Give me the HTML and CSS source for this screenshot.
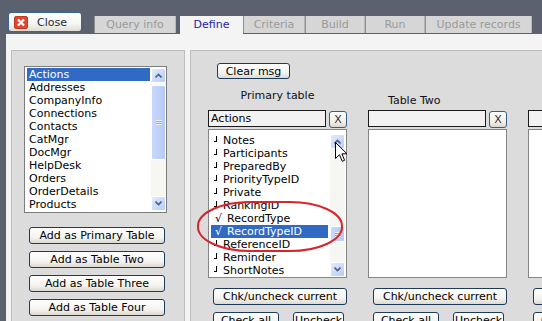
FILE: index.html
```html
<!DOCTYPE html>
<html lang="en">
<head>
  <meta charset="UTF-8" />
  <title>Query builder | Define</title>
  <link rel="stylesheet" href="styles.css">
</head>
<body>
  <div class="topbar">
    <button class="close-btn">
      <svg class="close-ico" width="14" height="13" viewBox="0 0 14 13">
        <rect x="0.5" y="0.5" width="13" height="12" rx="1.5" fill="#e2472f" stroke="#c23a22"/>
        <path d="M4 3.5 L10 9.5 M10 3.5 L4 9.5" stroke="#fff" stroke-width="2.2"/>
      </svg>
      Close
    </button>
    <div class="tabs">
      <div class="tab tab-query">Query info</div>
      <div class="tab active tab-define">Define</div>
      <div class="tab tab-criteria">Criteria</div>
      <div class="tab tab-build">Build</div>
      <div class="tab tab-run">Run</div>
      <div class="tab tab-update">Update records</div>
    </div>
  </div>

  <div class="content">
    <div class="left-panel">
      <div class="listbox tables">
        <div class="items">
          <div class="item sel">Actions</div>
          <div class="item">Addresses</div>
          <div class="item">CompanyInfo</div>
          <div class="item">Connections</div>
          <div class="item">Contacts</div>
          <div class="item">CatMgr</div>
          <div class="item">DocMgr</div>
          <div class="item">HelpDesk</div>
          <div class="item">Orders</div>
          <div class="item">OrderDetails</div>
          <div class="item">Products</div>
        </div>
        <div class="scrollbar">
          <div class="sb-btn"><svg width="7" height="5" viewBox="0 0 7 5"><path d="M0.5 4.5 L3.5 1.5 L6.5 4.5" fill="none" stroke="#4d6185" stroke-width="1.6"/></svg></div>
          <div class="sb-thumb tall"><span class="grip"></span></div>
          <div class="sb-btn down"><svg width="7" height="5" viewBox="0 0 7 5"><path d="M0.5 0.5 L3.5 3.5 L6.5 0.5" fill="none" stroke="#4d6185" stroke-width="1.6"/></svg></div>
        </div>
      </div>

      <div class="add-btns">
        <button class="btn">Add as Primary Table</button>
        <button class="btn">Add as Table Two</button>
        <button class="btn">Add as Table Three</button>
        <button class="btn">Add as Table Four</button>
      </div>
    </div>

    <div class="right-panel">
      <button class="btn clear-btn">Clear msg</button>

      <div class="columns">
        <!-- Primary table -->
        <div class="column">
          <div class="col-label">Primary table</div>
          <div class="pick-row">
            <div class="pick-input">Actions</div>
            <button class="x-btn">X</button>
          </div>
          <div class="listbox fields">
            <div class="items">
              <div class="item"><span class="mark"></span>Notes</div>
              <div class="item"><span class="mark"></span>Participants</div>
              <div class="item"><span class="mark"></span>PreparedBy</div>
              <div class="item"><span class="mark"></span>PriorityTypeID</div>
              <div class="item"><span class="mark"></span>Private</div>
              <div class="item"><span class="mark"></span>RankingID</div>
              <div class="item"><span class="check">√</span>RecordType</div>
              <div class="item sel"><span class="check">√</span>RecordTypeID</div>
              <div class="item"><span class="mark"></span>ReferenceID</div>
              <div class="item"><span class="mark"></span>Reminder</div>
              <div class="item"><span class="mark"></span>ShortNotes</div>
            </div>
            <div class="scrollbar">
              <div class="sb-btn"><svg width="7" height="5" viewBox="0 0 7 5"><path d="M0.5 4.5 L3.5 1.5 L6.5 4.5" fill="none" stroke="#4d6185" stroke-width="1.6"/></svg></div>
              <div class="sb-thumb short"><span class="grip"></span></div>
              <div class="sb-btn down"><svg width="7" height="5" viewBox="0 0 7 5"><path d="M0.5 0.5 L3.5 3.5 L6.5 0.5" fill="none" stroke="#4d6185" stroke-width="1.6"/></svg></div>
            </div>

            <svg class="ring" width="146" height="51" viewBox="0 0 146 51">
              <rect x="1" y="1" width="144" height="49" rx="52" ry="24" fill="none" stroke="#d8242c" stroke-width="2"/>
            </svg>
            <svg class="pointer" width="13" height="21" viewBox="0 0 13 21">
              <path d="M0.5 0.5 L0.5 16.5 L4.5 12.7 L7.3 19.3 L9.6 18.3 L6.9 11.8 L12 11.8 Z" fill="#fff" stroke="#000" stroke-width="1"/>
            </svg>
          </div>
          <button class="btn chk-btn">Chk/uncheck current</button>
          <div class="chk-row">
            <button class="btn check-all">Check all</button>
            <button class="btn uncheck">Uncheck</button>
          </div>
        </div>

        <!-- Table two -->
        <div class="column">
          <div class="col-label offset">Table Two</div>
          <div class="pick-row">
            <div class="pick-input"></div>
            <button class="x-btn">X</button>
          </div>
          <div class="listbox fields empty"></div>
          <button class="btn chk-btn">Chk/uncheck current</button>
          <div class="chk-row">
            <button class="btn check-all">Check all</button>
            <button class="btn uncheck">Uncheck</button>
          </div>
        </div>

        <!-- Table three -->
        <div class="column">
          <div class="col-label offset">Table Three</div>
          <div class="pick-row">
            <div class="pick-input"></div>
            <button class="x-btn">X</button>
          </div>
          <div class="listbox fields empty"></div>
          <button class="btn chk-btn">Chk/uncheck current</button>
          <div class="chk-row">
            <button class="btn check-all">Check all</button>
            <button class="btn uncheck">Uncheck</button>
          </div>
        </div>
      </div>
    </div>
  </div>
</body>
</html>
```

FILE: styles.css
```css
body {
  margin: 0;
  height: 321px;
  overflow: hidden;
  background-color: #5b616e;
  font-family: 'DejaVu Sans', Verdana, sans-serif;
  font-size: 11px;
  color: #000;
}

/* top bar with close button and tabs */
.topbar {
  display: flex;
  align-items: flex-start;
  height: 34px;
  padding-left: 8px;
}

.close-btn {
  display: flex;
  align-items: center;
  gap: 9px;
  width: 74px;
  height: 20px;
  margin-top: 12px;
  padding: 0 0 0 5px;
  box-sizing: border-box;
  border: 1px solid #3f6394;
  border-radius: 3px;
  background: linear-gradient(#ffffff, #f5f5f1 60%, #deddd6);
  font: inherit;
  color: #1d2a3a;
  cursor: pointer;
}

.tabs {
  display: flex;
  margin-top: 16px;
  margin-left: 12px;
}

.tab {
  height: 17px;
  line-height: 17px;
  box-sizing: border-box;
  text-align: center;
  white-space: nowrap;
  background-color: #d6d6d6;
  color: #9a9a9a;
  border-left: 1px solid #8f8f8f;
  border-right: 1px solid #b6b6b6;
}

.tab.active {
  height: 18px;
  margin-left: 4px;
  border: none;
  background-color: #f4f4f4;
  color: #2424a8;
}

.tab-query { width: 82px; }
.tab-define { width: 63px; }
.tab-criteria { width: 62px; }
.tab-build { width: 60px; }
.tab-run { width: 60px; }
.tab-update { width: 107px; }

/* main area */
.content {
  display: flex;
  align-items: flex-start;
  gap: 5px;
  height: 287px;
  margin-left: 6px;
  padding: 16px 0 0 5px;
  box-sizing: border-box;
  overflow: hidden;
  background-color: #f4f4f4;
}

.left-panel {
  flex-shrink: 0;
  width: 174px;
  height: 280px;
  padding: 15px 0 0 12px;
  box-sizing: border-box;
  border: 1px solid #bdbdbd;
  background-color: #dcdcdc;
}

.right-panel {
  flex-shrink: 0;
  width: 420px;
  height: 280px;
  box-sizing: border-box;
  border: 1px solid #bdbdbd;
  background-color: #dcdcdc;
}

/* list boxes */
.listbox {
  display: flex;
  background-color: #fff;
  border: 1px solid #7d7d7d;
  box-sizing: border-box;
}

.items {
  min-width: 0;
}

.item {
  height: 13px;
  line-height: 13px;
  white-space: nowrap;
  overflow: hidden;
}

.item.sel {
  background-color: #316ac5;
  color: #fff;
}

.tables {
  width: 143px;
  height: 147px;
  padding: 1px 0 1px 2px;
}

.tables .items {
  width: 123px;
}

.tables .item {
  padding-left: 2px;
}

.fields {
  position: relative;
  width: 139px;
  height: 149px;
  margin-top: 1px;
  padding: 4px 1px 0 2px;
  border-color: #858585;
}

.fields .items {
  width: 117px;
}

.fields .item {
  padding-left: 3px;
}

.mark {
  display: inline-block;
  vertical-align: top;
  width: 2px;
  height: 5px;
  margin-top: 2px;
  margin-right: 6px;
  border-right: 1px solid #000;
  border-bottom: 1px solid #000;
}

.check {
  display: inline-block;
  width: 12px;
  padding-left: 1px;
}

/* scrollbars */
.scrollbar {
  display: flex;
  flex-direction: column;
  width: 15px;
  margin-left: 1px;
  background-color: #f6f6f3;
}

.fields .scrollbar {
  margin-left: 2px;
}

.sb-btn {
  display: flex;
  align-items: center;
  justify-content: center;
  height: 15px;
  box-sizing: border-box;
  border: 1px solid #fff;
  border-radius: 2px;
  background: linear-gradient(135deg, #e2ebfe, #b8ccf7);
}

.sb-btn.down {
  margin-top: auto;
}

.sb-thumb {
  display: flex;
  align-items: center;
  justify-content: center;
  box-sizing: border-box;
  border: 1px solid #fff;
  border-radius: 2px;
  background: linear-gradient(90deg, #c9d8fc, #b6caf6);
}

.sb-thumb.tall {
  height: 75px;
  margin-top: 2px;
}

.sb-thumb.short {
  height: 16px;
  margin-top: 77px;
}

.grip {
  width: 6px;
  height: 5px;
  background: repeating-linear-gradient(#eef3ff 0 1px, #8da6d6 1px 2px);
}

/* buttons */
.btn {
  height: 17px;
  padding: 0;
  box-sizing: border-box;
  border: 1px solid #1f3b5c;
  border-radius: 3px;
  background: linear-gradient(#ffffff, #f3f2ee 65%, #dcd9d0);
  font: inherit;
  color: #000;
  white-space: nowrap;
  cursor: pointer;
}

.add-btns {
  display: flex;
  flex-direction: column;
  gap: 7px;
  margin: 14px 0 0 5px;
}

.add-btns .btn {
  width: 136px;
}

.clear-btn {
  width: 73px;
  height: 16px;
  margin: 12px 0 0 26px;
}

.columns {
  display: flex;
  gap: 21px;
  margin: 7px 0 0 17px;
}

.column {
  flex-shrink: 0;
  width: 139px;
}

.col-label {
  height: 24px;
  padding-top: 3px;
  box-sizing: border-box;
  text-align: center;
  color: #111;
}

.col-label.offset {
  padding: 8px 0 0 20px;
  text-align: left;
}

.pick-row {
  display: flex;
  align-items: flex-start;
}

.pick-input {
  width: 118px;
  height: 17px;
  line-height: 15px;
  padding-left: 2px;
  box-sizing: border-box;
  border: 1px solid #1a1a1a;
  background-color: #f2f2f2;
}

.x-btn {
  width: 18px;
  height: 17px;
  margin: 1px 0 0 3px;
  padding: 0;
  box-sizing: border-box;
  border: 1px solid #3d5e82;
  border-radius: 3px;
  background: linear-gradient(#ffffff, #efeee9 70%, #d9d6cd);
  font: inherit;
  color: #333;
}

.chk-btn {
  width: 134px;
  margin: 10px 0 0 5px;
}

.chk-row {
  display: flex;
  gap: 14px;
  margin: 7px 0 0 5px;
}

.check-all {
  width: 66px;
}

.uncheck {
  width: 51px;
}

/* annotation drawn over the field list */
.ring {
  position: absolute;
  left: -12px;
  top: 71px;
}

.pointer {
  position: absolute;
  left: 126px;
  top: 12px;
}
```
